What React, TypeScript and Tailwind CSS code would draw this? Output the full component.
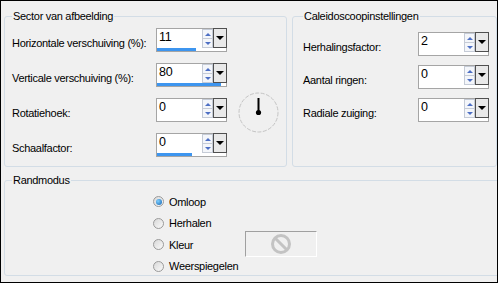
import React from "react";

const font = { fontFamily: '"Liberation Sans", Arial, sans-serif' };

function SpinBox({ value, bar }: { value: string; bar?: number }) {
  return (
    <div className="relative w-[71px] h-[24px] border border-[#a5a5a5] bg-white">
      <div className="absolute left-[2px] top-[1px] text-[12.5px] leading-[14px] text-black">{value}</div>
      {/* spin buttons */}
      <div className="absolute left-[45px] top-[0px] w-[11px] h-[19px] flex flex-col">
        <div className="flex-1 border border-[#c5cbd6] bg-[#f4f6fa] flex items-center justify-center">
          <div className="w-0 h-0 border-l-[3px] border-r-[3px] border-b-[3px] border-l-transparent border-r-transparent border-b-[#4d6fc4]" />
        </div>
        <div className="flex-1 border border-[#c5cbd6] border-t-0 bg-[#f4f6fa] flex items-center justify-center">
          <div className="w-0 h-0 border-l-[3px] border-r-[3px] border-t-[3px] border-l-transparent border-r-transparent border-t-[#4d6fc4]" />
        </div>
      </div>
      {/* dropdown button */}
      <div className="absolute left-[56px] top-[-1px] w-[14px] h-[20px] border border-[#505050] bg-[#e9e9e9] flex items-center justify-center">
        <div className="w-0 h-0 border-l-[4px] border-r-[4px] border-t-[4px] border-l-transparent border-r-transparent border-t-black" />
      </div>
      {bar !== undefined && (
        <div className="absolute left-0 bottom-0 h-[3px] bg-[#3d95ef]" style={{ width: bar }} />
      )}
    </div>
  );
}

function Row({ label, children, labelW }: { label: string; children: React.ReactNode; labelW: string }) {
  return (
    <div className="flex items-center">
      <div className={`${labelW} pt-[7px]`}>{label}</div>
      {children}
    </div>
  );
}

function Radio({ label, checked }: { label: string; checked?: boolean }) {
  return (
    <div className="flex items-center h-[21.5px]">
      <div className="w-[11px] h-[11px] rounded-full border border-[#9a9a9a] bg-gradient-to-br from-[#d8d8d8] to-[#fafafa] flex items-center justify-center">
        {checked && <div className="w-[6px] h-[6px] rounded-full bg-[radial-gradient(circle_at_35%_35%,#7fd0ff,#1262b0)]" />}
      </div>
      <span className="ml-[5px]">{label}</span>
    </div>
  );
}

export default function App() {
  return (
    <div
      className="w-[498px] h-[283px] border border-black bg-[#f0f0f0] overflow-hidden text-[11px] tracking-[-0.3px] text-black"
      style={font}
    >
      <div className="flex pl-[3px] pt-[8px]">
        <fieldset className="w-[282px] h-[158px] border border-[#d3dde6] rounded-[3px] px-[7px]">
          <legend className="px-[1px] leading-[14px]">Sector van afbeelding</legend>
          <div className="flex">
            <div className="flex flex-col gap-[11px] pt-[5px]">
              <Row label="Horizontale verschuiving (%):" labelW="w-[144px]">
                <SpinBox value="11" bar={39} />
              </Row>
              <Row label="Verticale verschuiving (%):" labelW="w-[144px]">
                <SpinBox value="80" bar={64} />
              </Row>
              <Row label="Rotatiehoek:" labelW="w-[144px]">
                <SpinBox value="0" />
              </Row>
              <Row label="Schaalfactor:" labelW="w-[144px]">
                <SpinBox value="0" bar={35} />
              </Row>
            </div>
            <div className="ml-[11px] mt-[69px]">
              <svg width="41" height="41" viewBox="0 0 41 41">
                <circle cx="20.5" cy="20.5" r="19.5" fill="none" stroke="#c4c4c4" strokeDasharray="4 1.5" />
                <line x1="20.5" y1="6" x2="20.5" y2="20" stroke="black" strokeWidth="2" />
                <circle cx="20.5" cy="20.5" r="2.6" fill="black" />
              </svg>
            </div>
          </div>
        </fieldset>
        <fieldset className="ml-[5px] w-[215px] h-[158px] border border-[#d3dde6] rounded-[3px] pl-[10px]">
          <legend className="px-[1px] leading-[14px]">Caleidoscoopinstellingen</legend>
          <div className="flex flex-col gap-[9px] pt-[9px]">
            <Row label="Herhalingsfactor:" labelW="w-[115px]">
              <SpinBox value="2" />
            </Row>
            <Row label="Aantal ringen:" labelW="w-[115px]">
              <SpinBox value="0" />
            </Row>
            <Row label="Radiale zuiging:" labelW="w-[115px]">
              <SpinBox value="0" />
            </Row>
          </div>
        </fieldset>
      </div>
      <div className="pl-[3px] pt-[6px]">
        <fieldset className="w-[510px] h-[103px] border border-[#d3dde6] rounded-[3px] px-[7px]">
          <legend className="px-[1px] leading-[14px]">Randmodus</legend>
          <div className="flex">
            <div className="ml-[141px] flex flex-col pt-[4px]">
              <Radio label="Omloop" checked />
              <Radio label="Herhalen" />
              <Radio label="Kleur" />
              <Radio label="Weerspiegelen" />
            </div>
            <div className="ml-[7px] mt-[44px] w-[72px] h-[26px] border-t border-l border-t-[#a0a0a0] border-l-[#a0a0a0] border-b border-r border-b-white border-r-white flex items-center justify-center">
              <svg width="22" height="22" viewBox="0 0 22 22">
                <circle cx="11" cy="11" r="8.5" fill="none" stroke="#c3c3c3" strokeWidth="3" />
                <line x1="5" y1="5" x2="17" y2="17" stroke="#c3c3c3" strokeWidth="3" />
              </svg>
            </div>
          </div>
        </fieldset>
      </div>
    </div>
  );
}
